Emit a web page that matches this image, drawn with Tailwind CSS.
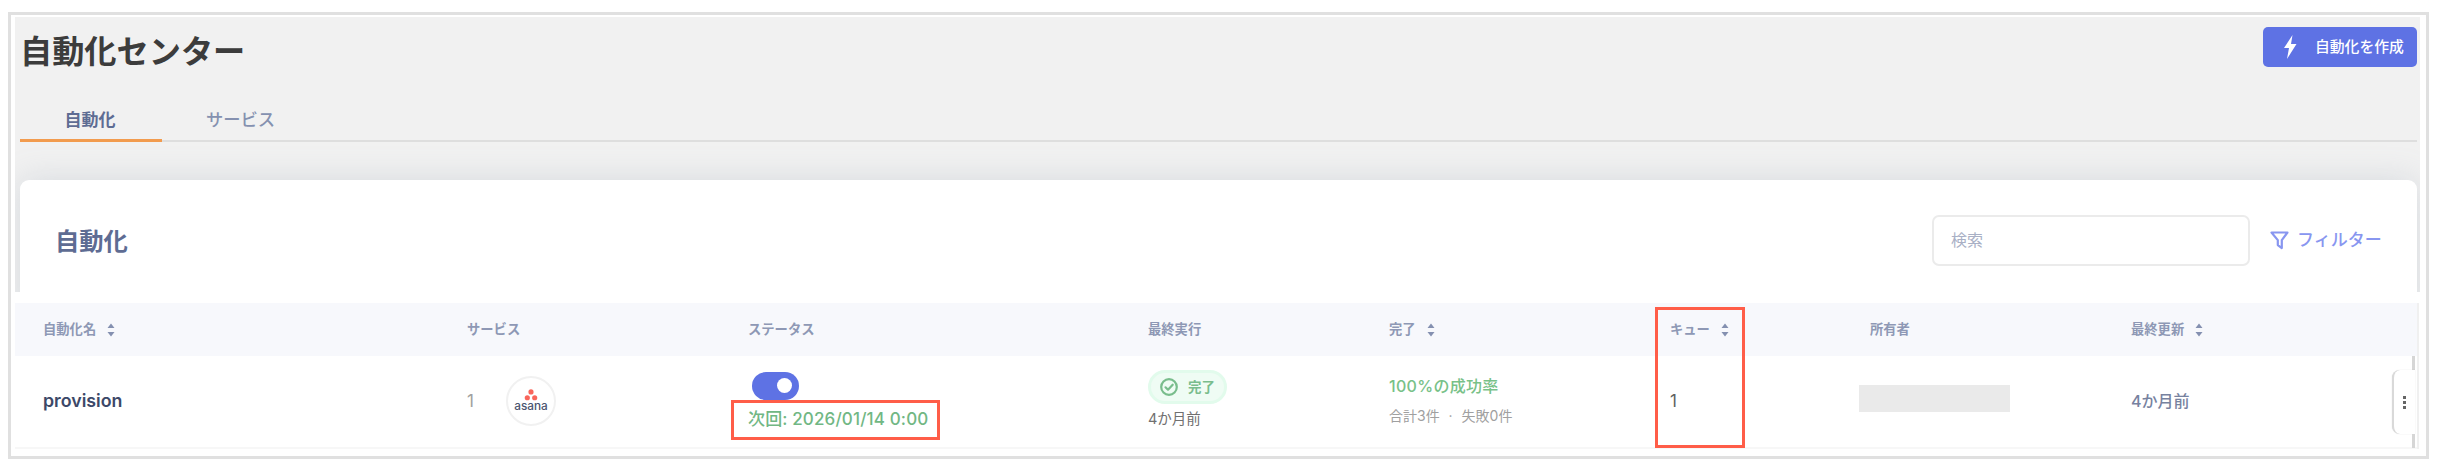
<!DOCTYPE html>
<html lang="ja">
  <head>
    <meta charset="UTF-8" />
    <meta name="viewport" content="width=device-width, initial-scale=1.0" />
    <title>自動化センター</title>

    <script src="https://cdn.jsdelivr.net/npm/@tailwindcss/browser@4"></script>
  </head>
  <body class="bg-white pt-3 pl-2 font-['Inter','Noto_Sans_CJK_JP',sans-serif] whitespace-nowrap">
    <svg class="hidden">
      <symbol id="sort" viewBox="0 0 8 14">
        <path d="M4 0.5 7.5 5h-7zM4 13.500 0.5 9h7z" fill="#8490b0" />
      </symbol>
    </svg>

    <div class="relative w-[2421px] h-[447px] border-3 border-[#e0e0e0] pt-[2px] pl-1">
      <!-- Page header -->
      <div class="w-[2405px] h-[275px] bg-[#f1f1f1] pl-[5px] pr-[3px] overflow-hidden">
        <div class="flex justify-between items-start h-[84px] pt-[10px]">
          <h1 class="pt-px text-[32.200px] leading-[48px] font-bold text-[#3c3c3c]">自動化センター</h1>
          <button class="flex items-center w-[154px] h-10 rounded-[5px] bg-[#5e72e4] pl-[20px] text-white">
            <svg class="w-[14px] h-[24px]" viewBox="0 0 14 24" fill="currentColor">
              <path d="M9.500 0 1 13h5L4 24l9.500-15H8z" />
            </svg>
            <span class="ml-[18px] text-[14.800px] font-medium">自動化を作成</span>
          </button>
        </div>

        <nav class="flex h-[41px] border-b-2 border-[#dedede] text-[17px] leading-[38px]">
          <a class="w-[142px] h-[41px] pr-[2px] text-center font-bold text-[#5e6c93] border-b-3 border-[#f29b4e]">自動化</a>
          <a class="pl-[44px] text-[17.300px] font-medium text-[#8591b0]">サービス</a>
        </nav>

        <!-- Card header -->
        <div class="mt-[38px] h-[140px] rounded-t-[9px] bg-white shadow-[0_0_32px_rgba(136,152,170,0.25)] flex items-start pt-[35px] pl-[35px]">
          <h2 class="pt-px text-[24.300px] leading-[50px] font-bold text-[#5e6c93]">自動化</h2>
          <div class="ml-auto w-[318px] h-[51px] rounded-[7px] border-2 border-[#ebebeb] pl-[17px] text-[16px] leading-[46px] text-[#a9b0c5]">検索</div>
          <a class="flex items-center h-[51px] w-[167px] pl-[20px] text-[#8896f0]">
            <svg class="w-[19px] h-[19px]" viewBox="0 0 19 19" fill="none" stroke="currentColor" stroke-width="2.200" stroke-linejoin="round">
              <path d="M1.500 1.500h16l-5.700 7.600v8l-4-3V9.100z" />
            </svg>
            <span class="ml-[8px] pt-px text-[17px] font-medium">フィルター</span>
          </a>
        </div>
      </div>

      <!-- Table -->
      <div class="mt-[11px] w-[2404px] h-[146px] border-r-2 border-[#f0f0f0]">
        <div class="grid grid-cols-[424px_281px_400px_241px_281px_200px_261px_1fr] items-center h-[53px] pl-7 bg-[#f7f8fc] text-[13.300px] font-bold text-[#8e98b5]">
          <div class="flex items-center gap-[11px]">自動化名<svg class="w-2 h-[14px]"><use href="#sort" /></svg></div>
          <div>サービス</div>
          <div>ステータス</div>
          <div>最終実行</div>
          <div class="flex items-center gap-[11px]">完了<svg class="w-2 h-[14px]"><use href="#sort" /></svg></div>
          <div class="flex items-center gap-[11px]">キュー<svg class="w-2 h-[14px]"><use href="#sort" /></svg></div>
          <div>所有者</div>
          <div class="flex items-center gap-[11px]">最終更新<svg class="w-2 h-[14px]"><use href="#sort" /></svg></div>
        </div>

        <div class="grid grid-cols-[424px_281px_400px_241px_281px_200px_261px_1fr] h-[93px] pl-7 border-b-2 border-[#f7f7f7]">
          <div class="text-[17.800px] leading-[90px] font-semibold text-[#3c4868]">provision</div>

          <div class="flex items-start">
            <span class="w-[39px] text-[17px] leading-[90px] text-[#a0a0a0]">1</span>
            <div class="mt-5 flex flex-col items-center size-[50px] rounded-full border-2 border-[#f1f1f1]">
              <svg class="mt-[11px] w-[14px] h-[12px]" viewBox="0 0 14 13" fill="#f9655b">
                <circle cx="7" cy="3.200" r="2.800" />
                <circle cx="3" cy="9.500" r="2.800" />
                <circle cx="11" cy="9.500" r="2.800" />
              </svg>
              <span class="-mt-px text-[11.800px] leading-[13px] font-medium text-[#4c5570]">asana</span>
            </div>
          </div>

          <div>
            <div class="mt-4 ml-1 w-[47px] h-[28px] rounded-full bg-[#5e72e4] pl-[25px] pt-[6px]">
              <div class="size-[15px] rounded-full bg-white"></div>
            </div>
            <div class="mt-[7px] text-[17px] leading-6 tracking-[0.14px] font-medium text-[#71b784]">次回: 2026/01/14 0:00</div>
          </div>

          <div>
            <div class="mt-[14px] flex items-center w-[79px] h-[34px] rounded-full border-3 border-[#e2fbec] bg-[#effcf4] pl-[9px] text-[#79bd8c]">
              <svg class="size-[18px]" viewBox="0 0 18 18" fill="none" stroke="currentColor" stroke-width="2.200" stroke-linecap="round" stroke-linejoin="round">
                <circle cx="9" cy="9" r="7.800" />
                <path d="m5.500 9.300 2.500 2.400 4.700-5" />
              </svg>
              <span class="ml-[10px] text-[13.500px] font-bold">完了</span>
            </div>
            <div class="mt-[3px] text-[14.500px] leading-6 text-[#707070]">4か月前</div>
          </div>

          <div class="pt-[18px]">
            <div class="text-[16px] leading-6 tracking-[0.3px] font-medium text-[#78c188]">100%の成功率</div>
            <div class="mt-[6px] text-[14px] leading-6 text-[#a0a0a0]">合計3件<span class="mx-[5px]"> · </span>失敗0件</div>
          </div>

          <div class="text-[17px] leading-[90px] text-[#606060]">1</div>

          <div>
            <div class="mt-[29px] -ml-[11px] w-[151px] h-[27px] bg-[#eaeaea]"></div>
          </div>

          <div class="flex">
            <span class="text-[16px] leading-[90px] font-medium text-[#77829f]">4か月前</span>
            <!-- Row menu -->
            <div class="ml-auto mr-[2px] flex flex-col items-end">
              <div class="w-[3px] h-[14px] bg-[#d6d6d6]"></div>
              <div class="flex flex-col items-center gap-[2px] w-[23px] h-[64px] pt-[26px] rounded-l-[8px] border-l-2 border-[#d9d9d9] bg-white shadow-[0_0_1px_rgba(0,0,0,0.2)]">
                <i class="size-[3px] bg-[#666]"></i>
                <i class="size-[3px] bg-[#666]"></i>
                <i class="size-[3px] bg-[#666]"></i>
              </div>
              <div class="w-[3px] h-[14px] bg-[#d6d6d6]"></div>
            </div>
          </div>
        </div>
      </div>

      <!-- Highlight boxes -->
      <div class="absolute left-[720px] top-[385px] w-[209px] h-[40px] border-3 border-[#ff5d48]"></div>
      <div class="absolute left-[1644px] top-[292px] w-[90px] h-[141px] border-3 border-[#ff5d48]"></div>
    </div>
  </body>
</html>
